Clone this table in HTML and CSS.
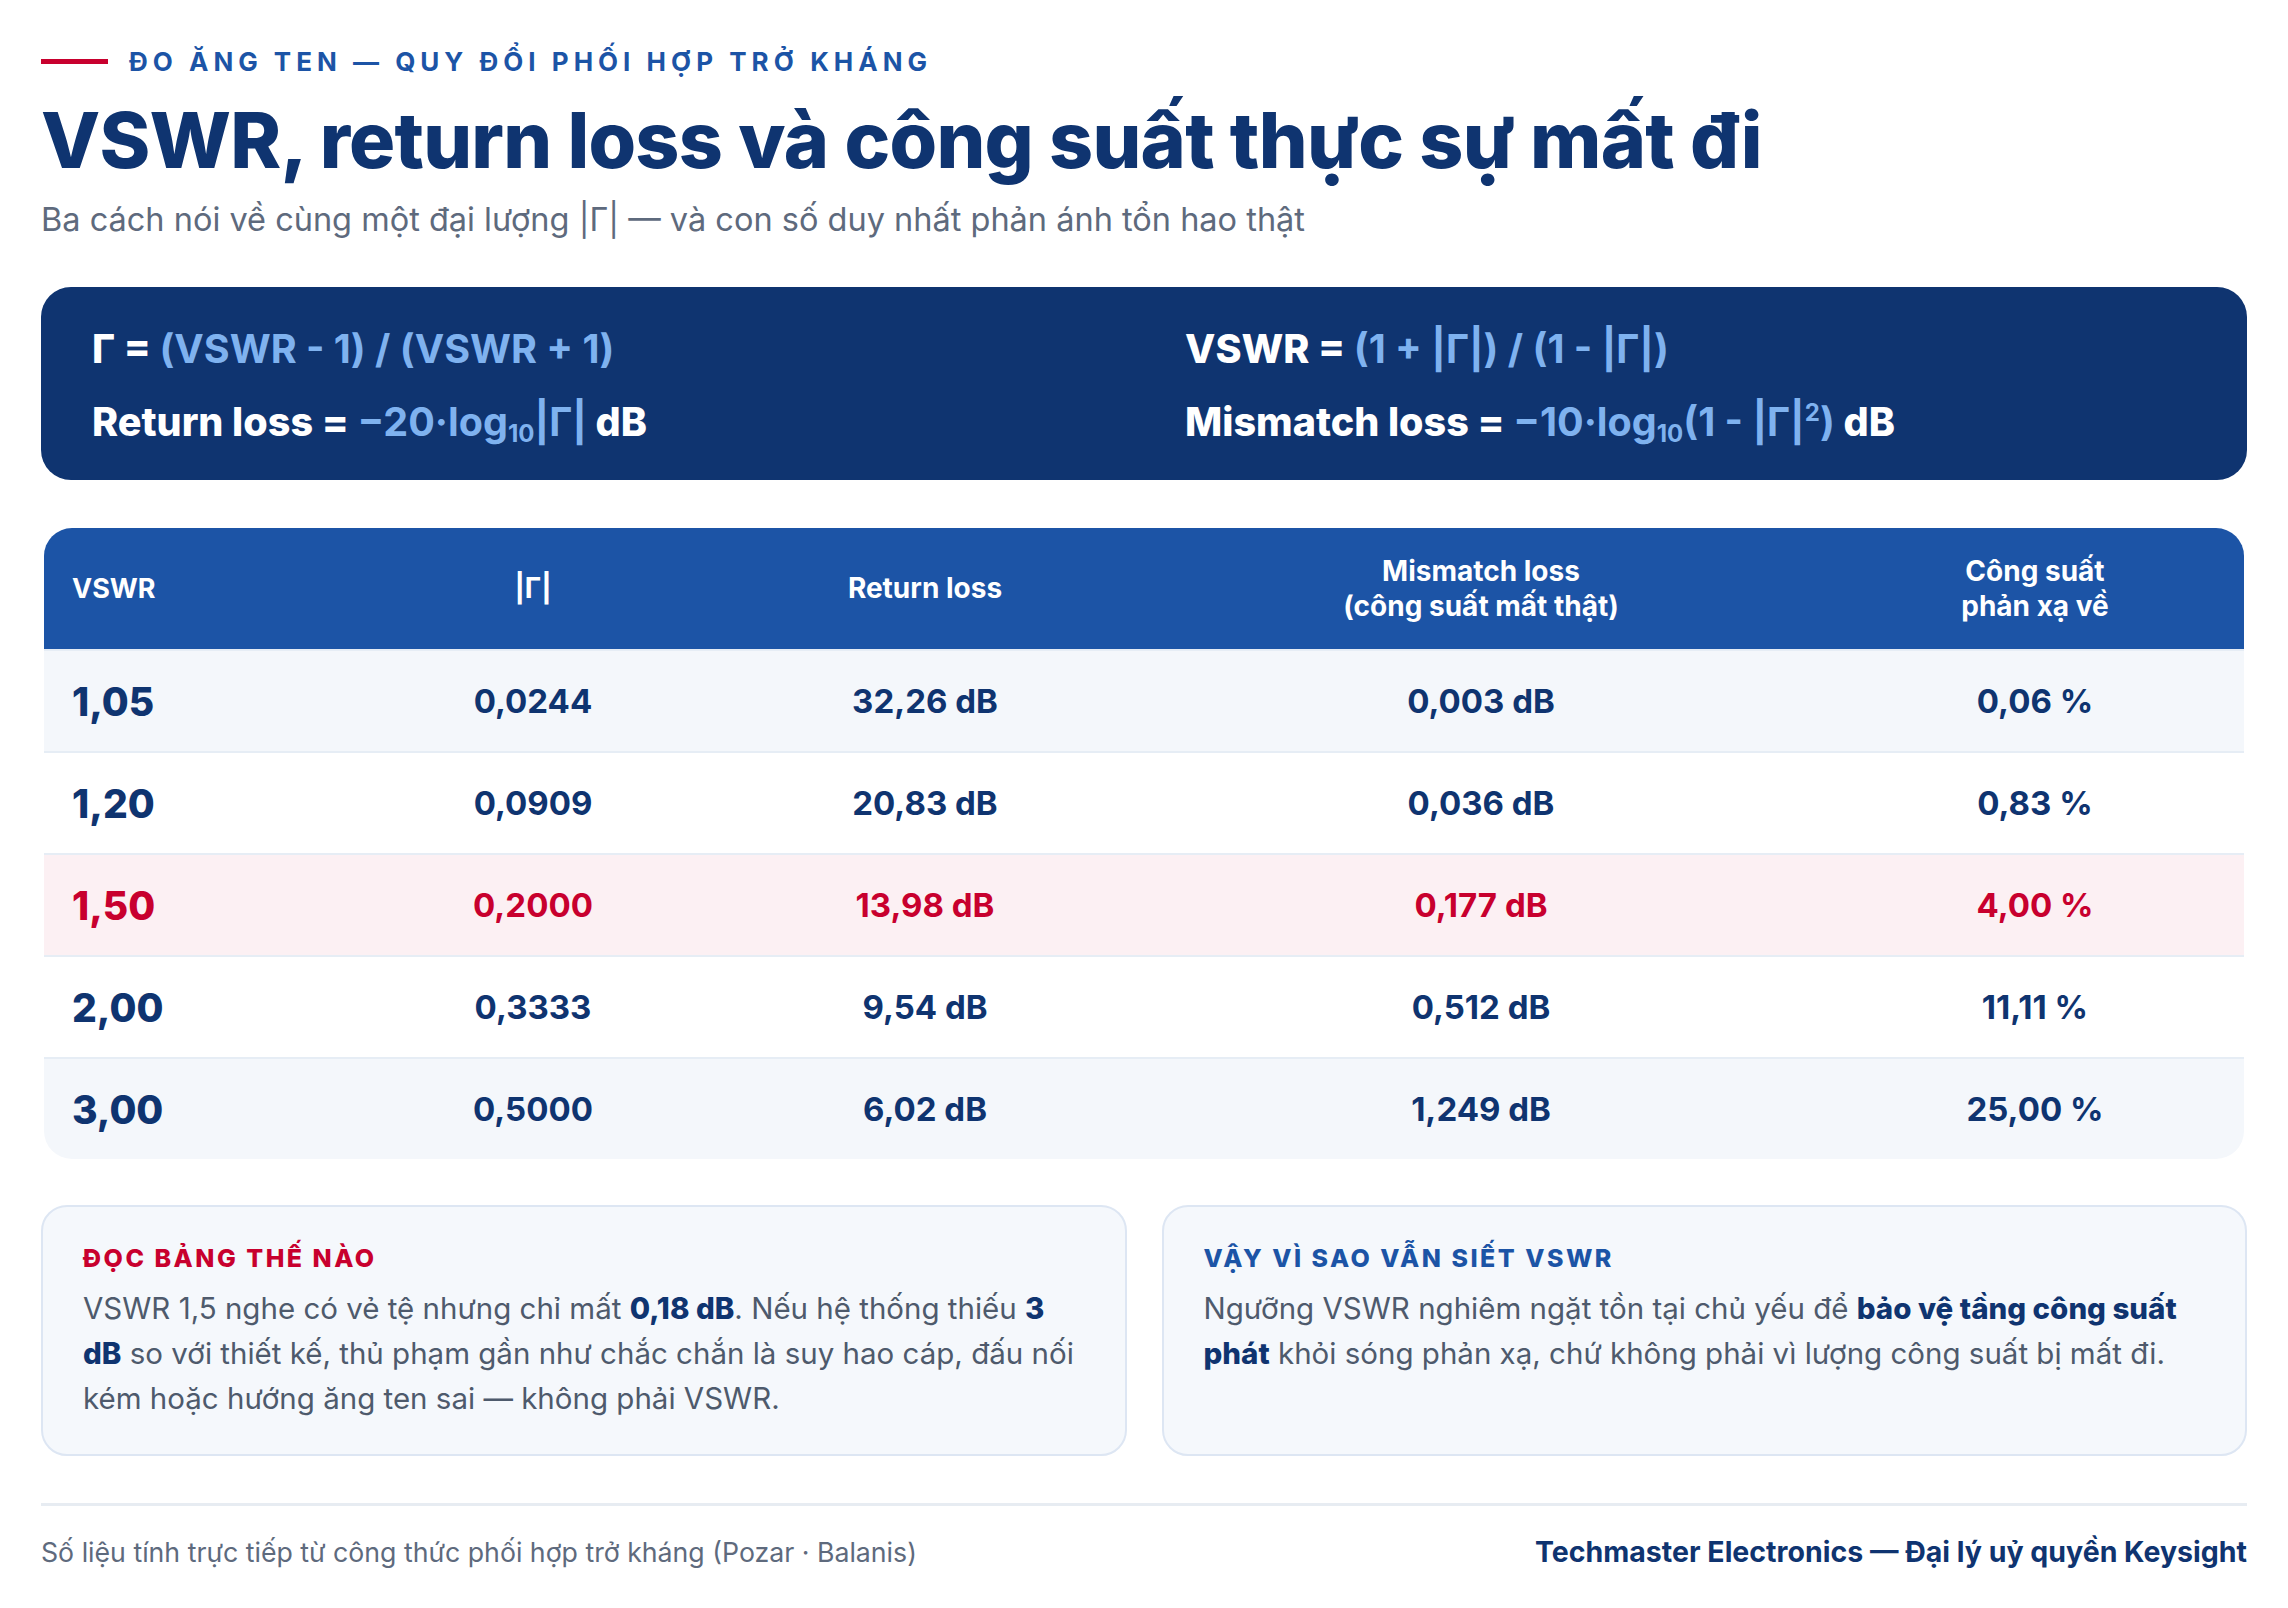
FILE: index.html
```html
<!DOCTYPE html>
<html lang="vi">
<head>
<meta charset="utf-8">
<title>VSWR, return loss và công suất thực sự mất đi</title>
<link rel="stylesheet" href="styles.css">
</head>
<body>
<main class="page">
  <div class="eyebrow"><span class="eyebrow-bar"></span><span class="eyebrow-text">ĐO ĂNG TEN — QUY ĐỔI PHỐI HỢP TRỞ KHÁNG</span></div>
  <h1 class="title">VSWR, return loss và công suất thực sự mất đi</h1>
  <p class="subtitle">Ba cách nói về cùng một đại lượng |Γ| — và con số duy nhất phản ánh tổn hao thật</p>

  <section class="formulas">
    <div class="fcol">
      <div class="fline">Γ = <span class="expr">(VSWR - 1) / (VSWR + 1)</span></div>
      <div class="fline">Return loss = <span class="expr">−20·log<sub>10</sub>|Γ|</span> dB</div>
    </div>
    <div class="fcol">
      <div class="fline">VSWR = <span class="expr">(1 + |Γ|) / (1 - |Γ|)</span></div>
      <div class="fline">Mismatch loss = <span class="expr">−10·log<sub>10</sub>(1 - |Γ|<sup>2</sup>)</span> dB</div>
    </div>
  </section>

  <section class="table">
    <div class="row head">
      <div class="cell first">VSWR</div>
      <div class="cell">|Γ|</div>
      <div class="cell">Return loss</div>
      <div class="cell">Mismatch loss<br>(công suất mất thật)</div>
      <div class="cell">Công suất<br>phản xạ về</div>
    </div>
    <div class="row alt">
      <div class="cell first">1,05</div><div class="cell">0,0244</div><div class="cell">32,26 dB</div><div class="cell">0,003 dB</div><div class="cell">0,06 %</div>
    </div>
    <div class="row">
      <div class="cell first">1,20</div><div class="cell">0,0909</div><div class="cell">20,83 dB</div><div class="cell">0,036 dB</div><div class="cell">0,83 %</div>
    </div>
    <div class="row hl">
      <div class="cell first">1,50</div><div class="cell">0,2000</div><div class="cell">13,98 dB</div><div class="cell">0,177 dB</div><div class="cell">4,00 %</div>
    </div>
    <div class="row">
      <div class="cell first">2,00</div><div class="cell">0,3333</div><div class="cell">9,54 dB</div><div class="cell">0,512 dB</div><div class="cell">11,11 %</div>
    </div>
    <div class="row alt last">
      <div class="cell first">3,00</div><div class="cell">0,5000</div><div class="cell">6,02 dB</div><div class="cell">1,249 dB</div><div class="cell">25,00 %</div>
    </div>
  </section>

  <section class="cards">
    <div class="card">
      <h2 class="card-title red">ĐỌC BẢNG THẾ NÀO</h2>
      <p class="card-body">VSWR 1,5 nghe có vẻ tệ nhưng chỉ mất <b>0,18 dB</b>. Nếu hệ thống thiếu <b>3 dB</b> so với thiết kế, thủ phạm gần như chắc chắn là suy hao cáp, đấu nối kém hoặc hướng ăng ten sai — không phải VSWR.</p>
    </div>
    <div class="card">
      <h2 class="card-title blue">VẬY VÌ SAO VẪN SIẾT VSWR</h2>
      <p class="card-body">Ngưỡng VSWR nghiêm ngặt tồn tại chủ yếu để <b>bảo vệ tầng công suất phát</b> khỏi sóng phản xạ, chứ không phải vì lượng công suất bị mất đi.</p>
    </div>
  </section>

  <footer class="footer">
    <span class="source">Số liệu tính trực tiếp từ công thức phối hợp trở kháng (Pozar · Balanis)</span>
    <span class="brand">Techmaster Electronics — Đại lý uỷ quyền Keysight</span>
  </footer>
</main>
</body>
</html>
```

FILE: styles.css
```css
* { box-sizing: border-box; }
html, body { margin: 0; padding: 0; background: #ffffff; }
body {
  font-family: Inter, "Noto Sans", "DejaVu Sans", sans-serif;
  color: #0f3470;
}
.page {
  width: 2288px;
  padding: 38px 41px 0 41px;
}
.eyebrow {
  display: flex;
  align-items: center;
  gap: 21px;
  height: 46px;
}
.eyebrow-bar {
  width: 67px;
  height: 5px;
  background: #c8002e;
}
.eyebrow-text {
  font-size: 26px;
  font-weight: 700;
  letter-spacing: 5px;
  color: #1c54a6;
}
.title {
  margin: 8px 0 0 0;
  font-size: 77px;
  line-height: 96px;
  font-weight: 800;
  letter-spacing: -0.01em;
  color: #0f3470;
}
.subtitle {
  margin: 10px 0 0 0;
  font-size: 32.5px;
  line-height: 44px;
  color: #5e6a7d;
}
.formulas {
  margin-top: 45px;
  height: 193px;
  background: #0f3470;
  border-radius: 30px;
  padding: 26px 51px 0 51px;
  display: grid;
  grid-template-columns: 1093px 1fr;
}
.fline {
  font-size: 39.5px;
  line-height: 73px;
  font-weight: 800;
  color: #ffffff;
  white-space: nowrap;
}
.expr {
  color: #7fb2ef;
  font-weight: 700;
}
.fline sub { font-size: 24px; vertical-align: -6px; line-height: 0; }
.fline sup { font-size: 24px; vertical-align: 15px; line-height: 0; }

.table {
  margin-top: 48px;
  width: 2200px;
  margin-left: 3px;
  border-radius: 28px;
  overflow: hidden;
}
.row {
  display: grid;
  grid-template-columns: 308px 362px 422px 690px 418px;
  height: 102px;
  align-items: center;
  border-top: 2px solid #e6edf5;
  background: #ffffff;
}
.row.head {
  height: 121px;
  background: #1c54a6;
  border-top: none;
}
.row.alt { background: #f4f7fb; }
.row.hl { background: #fcf0f3; }
.cell {
  text-align: center;
  font-size: 33px;
  font-weight: 700;
  color: #0f3470;
}
.cell.first {
  text-align: left;
  padding-left: 28px;
  font-size: 39px;
  font-weight: 800;
}
.row.head .cell {
  color: #ffffff;
  font-size: 28px;
  line-height: 35px;
  font-weight: 700;
}
.row.head .cell.first { font-size: 27px; }
.row.hl .cell { color: #c8002e; }

.cards {
  margin-top: 46px;
  display: grid;
  grid-template-columns: 1fr 1fr;
  gap: 35px;
}
.card {
  height: 251px;
  background: #f5f8fc;
  border: 2px solid #dde6f3;
  border-radius: 26px;
  padding: 31px 40px 0 40px;
}
.card-title {
  margin: 0;
  font-size: 25px;
  line-height: 40px;
  font-weight: 800;
  letter-spacing: 0.1em;
}
.card-title.red { color: #c8002e; }
.card-title.blue { color: #1c54a6; }
.card-body {
  margin: 8px 0 0 0;
  font-size: 29.5px;
  line-height: 45px;
  color: #4e5a6c;
}
.card-body b { color: #0f3470; font-weight: 800; }

.footer {
  margin-top: 47px;
  border-top: 3px solid #e7ecf2;
  padding-top: 28px;
  display: flex;
  justify-content: space-between;
  align-items: center;
}
.source {
  font-size: 26.7px;
  color: #5e6a7d;
}
.brand {
  font-size: 28.5px;
  font-weight: 700;
  color: #0f3470;
}
```
